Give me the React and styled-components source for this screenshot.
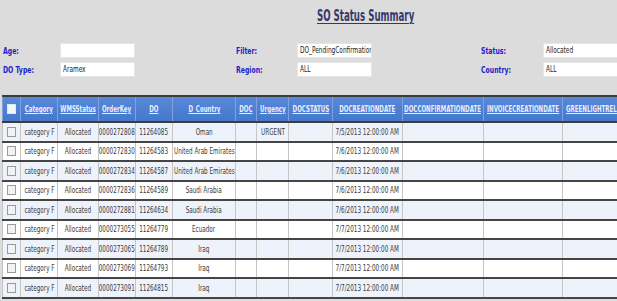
import React from 'react';
import styled, { createGlobalStyle } from 'styled-components';

const GlobalStyle = createGlobalStyle`
  html, body {
    margin: 0;
    padding: 0;
    background: #dcdcdc;
    overflow: hidden;
  }
  body {
    font-family: "DejaVu Sans Condensed", "DejaVu Sans", sans-serif;
  }
`;

const Page = styled.div`
  width: 617px;
  height: 301px;
  overflow: hidden;
  background: #dcdcdc;
`;

// narrow face: the screenshot uses a tight condensed font, squeeze the glyphs
const Narrow = styled.span`
  display: inline-block;
  white-space: nowrap;
  transform: scaleX(${p => p.$scale || 0.7});
  transform-origin: ${p => (p.$center ? 'center' : 'left')} center;
`;

const Title = styled.h1`
  margin: 0;
  padding: 7px 0 0 317px;
  height: 35px;
  box-sizing: border-box;
  font-size: 15px;
  font-weight: bold;
  color: #35386a;
  white-space: nowrap;
`;

const TitleText = styled(Narrow)`
  text-decoration: underline;
  text-underline-offset: 2px;
  text-decoration-thickness: 1px;
`;

const FilterGrid = styled.div`
  display: grid;
  grid-template-columns: 57px 75px 101px 61px 75px 109px 62px 90px;
  grid-auto-rows: 15px;
  row-gap: 4px;
  padding: 8px 0 0 3px;
  height: 60px;
  box-sizing: border-box;
  align-items: center;
`;

const Label = styled.label`
  grid-column: ${p => p.col};
  font-size: 9px;
  font-weight: bold;
  color: #1c22c8;
  white-space: nowrap;
`;

const Field = styled.div`
  grid-column: ${p => p.col};
  height: 15px;
  background: #fff;
  border: 1px solid #e6e6e6;
  box-sizing: border-box;
  font-size: 9px;
  line-height: 13px;
  color: #222;
  padding-left: 2px;
  white-space: nowrap;
  overflow: hidden;
`;

const TableWrap = styled.div`
  padding-left: 2px;
  width: 700px;
`;

const Table = styled.table`
  border-collapse: collapse;
  table-layout: fixed;
  width: 640px;
  border-top: 2px solid #3c3c3c;
  font-size: 9px;
`;

const Th = styled.th`
  height: 24px;
  padding: 0;
  background: linear-gradient(#5888d8, #4577cb);
  color: #e8eeff;
  font-weight: bold;
  border-left: 1px solid #7fa2de;
  overflow: hidden;
  border-bottom: 2px solid #3c3c3c;
`;

const HeadText = styled(Narrow)`
  text-decoration: underline;
`;

const Row = styled.tr`
  background: ${p => (p.$alt ? '#eef2fb' : '#ffffff')};
  border-bottom: 2px solid #454545;
`;

const Td = styled.td`
  height: 17.5px;
  padding: 0;
  color: #3a3a3a;
  border-left: 1px solid #c5c5c5;
  overflow: hidden;
`;

const Center = styled.div`
  display: flex;
  justify-content: ${p => (p.$start ? 'flex-start' : 'center')};
  padding-left: ${p => (p.$start ? '3px' : '0')};
  align-items: center;
`;

const Box = styled.span`
  display: inline-block;
  width: 7px;
  height: 8px;
  background: ${p => (p.$head ? '#f4f6fb' : '#f2f2f2')};
  border: 1px solid ${p => (p.$head ? '#e0e6f4' : '#9a9a9a')};
`;

const columns = [
  ['', 18],
  ['Category', 37],
  ['WMSStatus', 41],
  ['OrderKey', 37],
  ['DO', 37],
  ['D_Country', 63],
  ['DOC', 21],
  ['Urgency', 32],
  ['DOCSTATUS', 44],
  ['DOCREATIONDATE', 70],
  ['DOCCONFIRMATIONDATE', 81],
  ['INVOICECREATIONDATE', 79],
  ['GREENLIGHTRELEASEDATE', 80],
];

const rows = [
  ['0000272808', '11264085', 'Oman', 'URGENT', '7/5/2013 12:00:00 AM'],
  ['0000272830', '11264583', 'United Arab Emirates', '', '7/6/2013 12:00:00 AM'],
  ['0000272834', '11264587', 'United Arab Emirates', '', '7/6/2013 12:00:00 AM'],
  ['0000272836', '11264589', 'Saudi Arabia', '', '7/6/2013 12:00:00 AM'],
  ['0000272881', '11264634', 'Saudi Arabia', '', '7/6/2013 12:00:00 AM'],
  ['0000273055', '11264779', 'Ecuador', '', '7/7/2013 12:00:00 AM'],
  ['0000273065', '11264789', 'Iraq', '', '7/7/2013 12:00:00 AM'],
  ['0000273069', '11264793', 'Iraq', '', '7/7/2013 12:00:00 AM'],
  ['0000273091', '11264815', 'Iraq', '', '7/7/2013 12:00:00 AM'],
];

const Cell = ({ children }) => (
  <Td>
    <Center>{children ? <Narrow $center>{children}</Narrow> : null}</Center>
  </Td>
);

const filters = [
  ['Age:', '', 'Filter:', 'DO_PendingConfirmation', 'Status:', 'Allocated'],
  ['DO Type:', 'Aramex', 'Region:', 'ALL', 'Country:', 'ALL'],
];

export default function App() {
  return (
    <Page>
      <GlobalStyle />
      <Title>
        <TitleText $scale={0.64}>SO Status Summary</TitleText>
      </Title>
      <FilterGrid>
        {filters.map(r =>
          [1, 4, 7].map((col, j) => (
            <React.Fragment key={r[j * 2]}>
              <Label col={col}><Narrow $scale={0.76}>{r[j * 2]}</Narrow></Label>
              <Field col={col + 1}><Narrow $scale={0.72}>{r[j * 2 + 1]}</Narrow></Field>
            </React.Fragment>
          ))
        )}
      </FilterGrid>
      <TableWrap>
        <Table>
          <colgroup>
            {columns.map(([name, w]) => (
              <col key={name || 'chk'} style={{ width: w }} />
            ))}
          </colgroup>
          <thead>
            <tr>
              {columns.map(([name], i) => {
                const last = i === columns.length - 1;
                return (
                  <Th key={name || 'chk'}>
                    <Center $start={last}>
                      {name ? (
                        <HeadText $center={!last} $scale={0.68}>{name}</HeadText>
                      ) : (
                        <Box $head />
                      )}
                    </Center>
                  </Th>
                );
              })}
            </tr>
          </thead>
          <tbody>
            {rows.map(([key, doNo, country, urgency, date], i) => (
              <Row key={key} $alt={i % 2 === 0}>
                <Td><Center><Box /></Center></Td>
                <Cell>category F</Cell>
                <Cell>Allocated</Cell>
                <Cell>{key}</Cell>
                <Cell>{doNo}</Cell>
                <Cell>{country}</Cell>
                <Cell />
                <Cell>{urgency}</Cell>
                <Cell />
                <Cell>{date}</Cell>
                <Cell />
                <Cell />
                <Cell />
              </Row>
            ))}
          </tbody>
        </Table>
      </TableWrap>
    </Page>
  );
}
